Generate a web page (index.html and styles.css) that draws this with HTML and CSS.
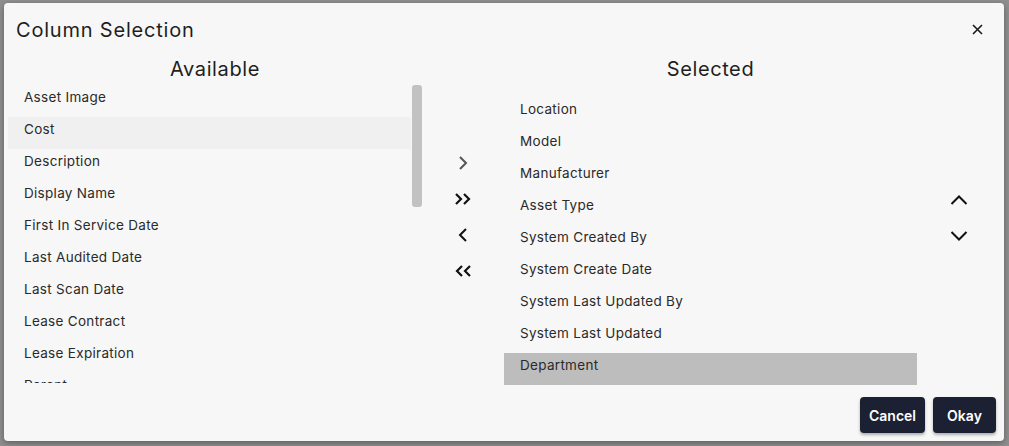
FILE: index.html
```html
<!DOCTYPE html>
<html lang="en">
<head>
    <meta charset="UTF-8">
    <title>Column Selection</title>
    <link rel="stylesheet" href="styles.css">
</head>
<body>

<div class="dialog">
    <div class="dialog-header">
        <h1 class="dialog-title">Column Selection</h1>
        <button class="close-btn" aria-label="Close">
            <svg width="11" height="11" viewBox="0 0 11 11"><path d="M1 1 L10 10 M10 1 L1 10" stroke="#1a1a1a" stroke-width="1.6" fill="none"/></svg>
        </button>
    </div>

    <div class="dialog-body">
        <!-- Available columns -->
        <div class="col col-available">
            <h2 class="col-heading">Available</h2>
            <div class="list-wrap">
                <div class="list list-scroll">
                    <div class="item">Asset Image</div>
                    <div class="item hover">Cost</div>
                    <div class="item">Description</div>
                    <div class="item">Display Name</div>
                    <div class="item">First In Service Date</div>
                    <div class="item">Last Audited Date</div>
                    <div class="item">Last Scan Date</div>
                    <div class="item">Lease Contract</div>
                    <div class="item">Lease Expiration</div>
                    <div class="item">Parent</div>
                </div>
                <div class="scroll-track"><div class="scroll-thumb"></div></div>
            </div>
        </div>

        <!-- Move buttons -->
        <div class="col col-move">
            <button class="icon-btn disabled" aria-label="Add">
                <svg width="10" height="16" viewBox="0 0 10 16"><path d="M2 2 L8 8 L2 14" stroke="#555" stroke-width="2" fill="none"/></svg>
            </button>
            <button class="icon-btn" aria-label="Add all">
                <svg width="18" height="14" viewBox="0 0 18 14"><path d="M2 2 L7 7 L2 12 M10 2 L15 7 L10 12" stroke="#111" stroke-width="2.2" fill="none"/></svg>
            </button>
            <button class="icon-btn" aria-label="Remove">
                <svg width="10" height="16" viewBox="0 0 10 16"><path d="M8 2 L2 8 L8 14" stroke="#111" stroke-width="2" fill="none"/></svg>
            </button>
            <button class="icon-btn" aria-label="Remove all">
                <svg width="18" height="14" viewBox="0 0 18 14"><path d="M8 2 L3 7 L8 12 M16 2 L11 7 L16 12" stroke="#111" stroke-width="2.2" fill="none"/></svg>
            </button>
        </div>

        <!-- Selected columns -->
        <div class="col col-selected">
            <h2 class="col-heading">Selected</h2>
            <div class="list list-selected">
                <div class="item">Location</div>
                <div class="item">Model</div>
                <div class="item">Manufacturer</div>
                <div class="item">Asset Type</div>
                <div class="item">System Created By</div>
                <div class="item">System Create Date</div>
                <div class="item">System Last Updated By</div>
                <div class="item">System Last Updated</div>
                <div class="item active">Department</div>
            </div>
        </div>

        <!-- Order buttons -->
        <div class="col col-order">
            <button class="icon-btn" aria-label="Move up">
                <svg width="18" height="10" viewBox="0 0 18 10"><path d="M1.5 9 L9 1.5 L16.5 9" stroke="#111" stroke-width="2" fill="none"/></svg>
            </button>
            <button class="icon-btn" aria-label="Move down">
                <svg width="18" height="10" viewBox="0 0 18 10"><path d="M1.5 1 L9 8.5 L16.5 1" stroke="#111" stroke-width="2" fill="none"/></svg>
            </button>
        </div>
    </div>

    <div class="dialog-footer">
        <button class="btn">Cancel</button>
        <button class="btn">Okay</button>
    </div>
</div>

</body>
</html>
```

FILE: styles.css
```css
/* Page behind the modal (dimmed table) */
body {
    margin: 0;
    padding: 3px 0 0 4px;
    height: 446px;
    box-sizing: border-box;
    overflow: hidden;
    font-family: Inter, "Noto Sans", sans-serif;
    background-color: #8f8f8f;
    background-image: repeating-linear-gradient(to bottom, transparent 0, transparent 46px, #a3a3a3 46px, #a3a3a3 47px, transparent 47px, transparent 82px);
    background-size: 100% 41px;
    background-position: 0 6px;
}

button {
    font-family: inherit;
    cursor: pointer;
}

.dialog {
    width: 1000px;
    height: 438px;
    background-color: #f7f7f7;
    border-radius: 4px;
    box-shadow: 0 2px 6px rgba(0,0,0,0.35);
    display: flex;
    flex-direction: column;
}

.dialog-header {
    height: 53px;
    display: flex;
    align-items: center;
    justify-content: space-between;
    padding: 0 21px 0 12px;
}

.dialog-title {
    margin: 0;
    font-size: 20px;
    font-weight: 400;
    letter-spacing: 0.8px;
    color: #1f1f1f;
}

.close-btn {
    background: none;
    border: none;
    padding: 0;
    width: 11px;
    height: 11px;
    display: flex;
}

.dialog-body {
    display: flex;
    padding: 0 0 0 4px;
}

.col-heading {
    margin: 0;
    height: 29px;
    line-height: 26px;
    text-align: center;
    font-size: 20px;
    font-weight: 400;
    letter-spacing: 0.6px;
    color: #1f1f1f;
}

.col-available {
    width: 414px;
}

.col-selected {
    width: 413px;
}

.list-wrap {
    display: flex;
    height: 298px;
}

.list-scroll {
    flex: 1;
    overflow: hidden;
}

/* drawn scrollbar, headless chrome hides the native one */
.scroll-track {
    width: 10px;
    margin-left: 1px;
}

.scroll-thumb {
    height: 122px;
    background-color: #c2c2c2;
    border-radius: 3px;
}

.list-selected {
    margin-top: 12px;
}

.item {
    height: 32px;
    box-sizing: border-box;
    padding: 0 16px 8px;
    line-height: 24px;
    font-size: 13.5px;
    letter-spacing: 0.3px;
    color: #2a2a2a;
}

.item.hover {
    background-color: #f0f0f0;
}

.item.active {
    background-color: #bdbdbd;
}

.col-move {
    width: 82px;
    padding-top: 89px;
    display: flex;
    flex-direction: column;
    align-items: center;
}

.col-order {
    width: 87px;
    padding: 126px 4px 0 0;
    box-sizing: border-box;
    display: flex;
    flex-direction: column;
    align-items: center;
}

.icon-btn {
    background: none;
    border: none;
    padding: 0;
    width: 36px;
    height: 36px;
    display: flex;
    align-items: center;
    justify-content: center;
}

.icon-btn.disabled {
    cursor: default;
}

.dialog-footer {
    display: flex;
    justify-content: flex-end;
    gap: 8px;
    padding: 12px 8px 8px;
    margin-top: auto;
}

.btn {
    height: 36px;
    padding: 0 9px;
    min-width: 63px;
    border: none;
    border-radius: 4px;
    background-color: #1b2133;
    color: #ffffff;
    font-size: 14px;
    font-weight: 600;
    box-shadow: 0 2px 3px rgba(0,0,0,0.3);
}
```
